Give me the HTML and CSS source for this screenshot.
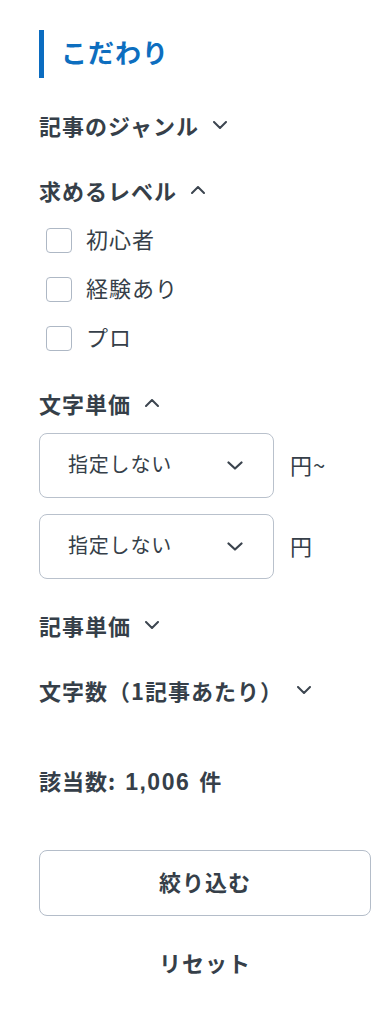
FILE: index.html
```html
<!DOCTYPE html>
<html lang="ja">
<head>
<meta charset="utf-8">
<link rel="stylesheet" href="styles.css">
</head>
<body>
<div class="panel">
  <h2 class="panel-title">こだわり</h2>

  <div class="section">
    <div class="sec-head"><span>記事のジャンル</span>
      <svg class="chev" viewBox="0 0 14 8"><path d="M1 1l6 6 6-6"/></svg>
    </div>
  </div>

  <div class="section">
    <div class="sec-head"><span>求めるレベル</span>
      <svg class="chev" viewBox="0 0 14 8"><path d="M1 7l6-6 6 6"/></svg>
    </div>
    <div class="options">
      <label class="option"><span class="box"></span><span class="opt-text">初心者</span></label>
      <label class="option"><span class="box"></span><span class="opt-text">経験あり</span></label>
      <label class="option"><span class="box"></span><span class="opt-text">プロ</span></label>
    </div>
  </div>

  <div class="section section-price">
    <div class="sec-head"><span>文字単価</span>
      <svg class="chev" viewBox="0 0 14 8"><path d="M1 7l6-6 6 6"/></svg>
    </div>
    <div class="price-fields">
      <div class="price-row">
        <div class="select"><span class="sel-text">指定しない</span>
          <svg class="sel-chev" viewBox="0 0 16 9"><path d="M1.5 1.5l6.5 6 6.5-6"/></svg>
        </div>
        <span class="unit">円~</span>
      </div>
      <div class="price-row">
        <div class="select"><span class="sel-text">指定しない</span>
          <svg class="sel-chev" viewBox="0 0 16 9"><path d="M1.5 1.5l6.5 6 6.5-6"/></svg>
        </div>
        <span class="unit">円</span>
      </div>
    </div>
  </div>

  <div class="section">
    <div class="sec-head"><span>記事単価</span>
      <svg class="chev" viewBox="0 0 14 8"><path d="M1 1l6 6 6-6"/></svg>
    </div>
  </div>

  <div class="section">
    <div class="sec-head"><span>文字数（1記事あたり）</span>
      <svg class="chev" viewBox="0 0 14 8"><path d="M1 1l6 6 6-6"/></svg>
    </div>
  </div>

  <div class="count">該当数: <span class="count-num">1,006</span> 件</div>

  <button class="submit">絞り込む</button>
  <div class="reset">リセット</div>
</div>
</body>
</html>
```

FILE: styles.css
```css
html, body {
  margin: 0;
  padding: 0;
  background: #ffffff;
}
body {
  font-family: "Noto Sans CJK JP", "Noto Sans", sans-serif;
  color: #363f49;
  letter-spacing: 1px;
}
.panel {
  width: 332px;
  padding: 30px 18px 40px 39px;
}
.panel-title {
  margin: 0;
  height: 48px;
  box-sizing: border-box;
  line-height: 44px;
  padding-bottom: 4px;
  border-left: 5px solid #0b6cc0;
  padding-left: 17px;
  font-size: 26px;
  font-weight: 700;
  color: #0d6ebf;
}
.section {
  margin-top: 33px;
}
.sec-head {
  display: flex;
  align-items: center;
  height: 32px;
  box-sizing: border-box;
  padding-bottom: 4px;
  line-height: 28px;
  font-size: 22px;
  font-weight: 700;
}
.chev {
  width: 14px;
  height: 8px;
  margin-left: 14px;
  fill: none;
  stroke: #3d4650;
  stroke-width: 2;
  stroke-linecap: round;
  stroke-linejoin: round;
}
.options {
  display: flex;
  flex-direction: column;
  gap: 13px;
  margin-top: 14px;
}
.option {
  display: flex;
  align-items: center;
  height: 36px;
  font-size: 22px;
  font-weight: 400;
  padding-left: 7px;
}
.opt-text {
  padding-bottom: 4px;
}
.box {
  width: 26px;
  height: 25px;
  box-sizing: border-box;
  border: 1.5px solid #aeb8c5;
  border-radius: 4px;
  margin-right: 14px;
}
.price-fields {
  display: flex;
  flex-direction: column;
  gap: 16px;
  margin-top: 12px;
}
.price-row {
  display: flex;
  align-items: center;
}
.select {
  width: 235px;
  height: 65px;
  box-sizing: border-box;
  border: 1px solid #b9c1cc;
  border-radius: 8px;
  display: flex;
  align-items: center;
  justify-content: space-between;
  padding: 0 30px 0 28px;
  font-size: 20px;
}
.sel-text {
  padding-bottom: 4px;
  letter-spacing: 0.8px;
}
.sel-chev {
  width: 16px;
  height: 9px;
  fill: none;
  stroke: #3a434d;
  stroke-width: 2.2;
  stroke-linecap: round;
  stroke-linejoin: round;
}
.unit {
  margin-left: 16px;
  padding-bottom: 4px;
  font-size: 22px;
}
.section-price + .section {
  margin-top: 32px;
}
.count {
  margin-top: 58px;
  height: 32px;
  box-sizing: border-box;
  padding-bottom: 4px;
  line-height: 28px;
  font-size: 22px;
  font-weight: 700;
  word-spacing: 3px;
}
.count-num {
  font-family: "Liberation Sans", "Noto Sans CJK JP", sans-serif;
  font-size: 23px;
  letter-spacing: 1.5px;
}
.submit {
  display: block;
  margin-top: 52px;
  width: 332px;
  height: 66px;
  padding: 0 0 4px;
  background: #ffffff;
  border: 1.5px solid #b4bdc9;
  border-radius: 8px;
  font-family: inherit;
  font-size: 22px;
  font-weight: 700;
  letter-spacing: 1px;
  color: #363f49;
}
.reset {
  margin-top: 32px;
  height: 32px;
  box-sizing: border-box;
  padding-bottom: 4px;
  line-height: 28px;
  text-align: center;
  font-size: 22px;
  font-weight: 700;
}
```
